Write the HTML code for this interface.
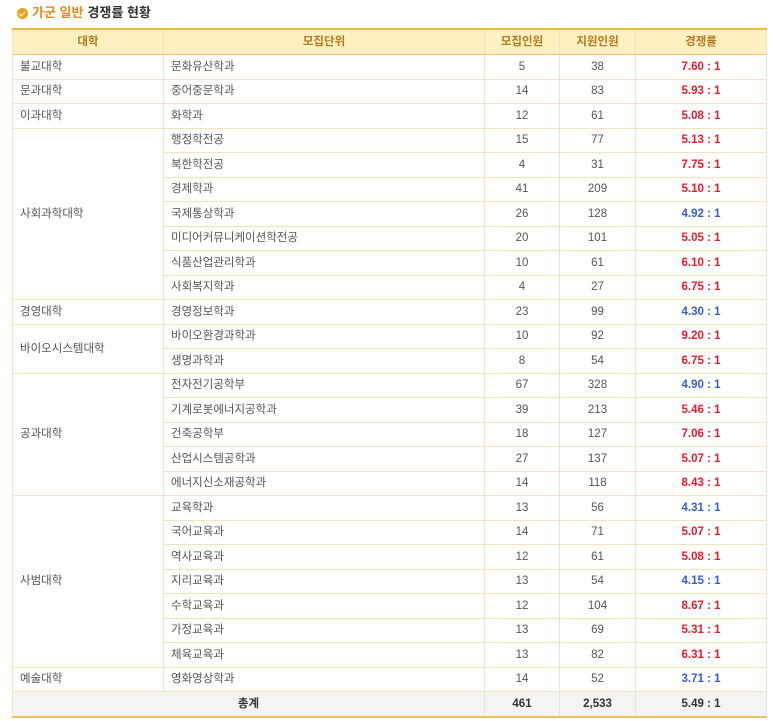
<!DOCTYPE html>
<html><head><meta charset="utf-8"><style>
body{margin:0;background:#fff;font-family:"Liberation Sans","Noto Sans CJK KR",sans-serif;}
h3{position:absolute;left:17px;top:5px;margin:0;font-size:13px;font-weight:bold;color:#333;line-height:16px;display:flex;align-items:center;}
h3 .ic{width:11px;height:11px;border-radius:50%;background:#e8a319;display:inline-block;margin-right:4px;position:relative}
h3 .ic:after{content:"";position:absolute;left:3px;top:2px;width:3px;height:5px;border:solid #fff;border-width:0 1.5px 1.5px 0;transform:rotate(45deg)}
h3 .o{color:#e8891a;margin-right:4px}
table{position:absolute;left:12px;top:28px;width:755px;border-collapse:collapse;font-size:11.5px;color:#555;border-top:2px solid #f5b83d;border-bottom:2px solid #f0c060;border-left:1px solid #f1e3c1;border-right:1px solid #f1e3c1;}
td,th{border:1px solid #f1e3c1;height:23.5px;padding:0 0 0 7px;line-height:14px}
th{background:#fff0c2;color:#b8791d;font-weight:bold;text-align:center;height:24px;padding:0;border-bottom:1px solid #f0c870}
td.c{text-align:center;padding:0}
.r{color:#e8192c;font-weight:bold;text-align:center;padding:0}
.b{color:#3a5bcf;font-weight:bold;text-align:center;padding:0}
tr.t td{background:#f4f4f4;font-weight:bold;color:#333;text-align:center;padding:0}
</style></head><body>
<h3><span class="ic"></span><span class="o">가군 일반</span>경쟁률 현황</h3>
<table>
<colgroup><col style="width:151px"><col style="width:321px"><col style="width:75px"><col style="width:76px"><col></colgroup>
<tr><th>대학</th><th>모집단위</th><th>모집인원</th><th>지원인원</th><th>경쟁률</th></tr>
<tr><td>불교대학</td><td>문화유산학과</td><td class="c">5</td><td class="c">38</td><td class="r">7.60 : 1</td></tr>
<tr><td>문과대학</td><td>중어중문학과</td><td class="c">14</td><td class="c">83</td><td class="r">5.93 : 1</td></tr>
<tr><td>이과대학</td><td>화학과</td><td class="c">12</td><td class="c">61</td><td class="r">5.08 : 1</td></tr>
<tr><td rowspan="7">사회과학대학</td><td>행정학전공</td><td class="c">15</td><td class="c">77</td><td class="r">5.13 : 1</td></tr>
<tr><td>북한학전공</td><td class="c">4</td><td class="c">31</td><td class="r">7.75 : 1</td></tr>
<tr><td>경제학과</td><td class="c">41</td><td class="c">209</td><td class="r">5.10 : 1</td></tr>
<tr><td>국제통상학과</td><td class="c">26</td><td class="c">128</td><td class="b">4.92 : 1</td></tr>
<tr><td>미디어커뮤니케이션학전공</td><td class="c">20</td><td class="c">101</td><td class="r">5.05 : 1</td></tr>
<tr><td>식품산업관리학과</td><td class="c">10</td><td class="c">61</td><td class="r">6.10 : 1</td></tr>
<tr><td>사회복지학과</td><td class="c">4</td><td class="c">27</td><td class="r">6.75 : 1</td></tr>
<tr><td>경영대학</td><td>경영정보학과</td><td class="c">23</td><td class="c">99</td><td class="b">4.30 : 1</td></tr>
<tr><td rowspan="2">바이오시스템대학</td><td>바이오환경과학과</td><td class="c">10</td><td class="c">92</td><td class="r">9.20 : 1</td></tr>
<tr><td>생명과학과</td><td class="c">8</td><td class="c">54</td><td class="r">6.75 : 1</td></tr>
<tr><td rowspan="5">공과대학</td><td>전자전기공학부</td><td class="c">67</td><td class="c">328</td><td class="b">4.90 : 1</td></tr>
<tr><td>기계로봇에너지공학과</td><td class="c">39</td><td class="c">213</td><td class="r">5.46 : 1</td></tr>
<tr><td>건축공학부</td><td class="c">18</td><td class="c">127</td><td class="r">7.06 : 1</td></tr>
<tr><td>산업시스템공학과</td><td class="c">27</td><td class="c">137</td><td class="r">5.07 : 1</td></tr>
<tr><td>에너지신소재공학과</td><td class="c">14</td><td class="c">118</td><td class="r">8.43 : 1</td></tr>
<tr><td rowspan="7">사범대학</td><td>교육학과</td><td class="c">13</td><td class="c">56</td><td class="b">4.31 : 1</td></tr>
<tr><td>국어교육과</td><td class="c">14</td><td class="c">71</td><td class="r">5.07 : 1</td></tr>
<tr><td>역사교육과</td><td class="c">12</td><td class="c">61</td><td class="r">5.08 : 1</td></tr>
<tr><td>지리교육과</td><td class="c">13</td><td class="c">54</td><td class="b">4.15 : 1</td></tr>
<tr><td>수학교육과</td><td class="c">12</td><td class="c">104</td><td class="r">8.67 : 1</td></tr>
<tr><td>가정교육과</td><td class="c">13</td><td class="c">69</td><td class="r">5.31 : 1</td></tr>
<tr><td>체육교육과</td><td class="c">13</td><td class="c">82</td><td class="r">6.31 : 1</td></tr>
<tr><td>예술대학</td><td>영화영상학과</td><td class="c">14</td><td class="c">52</td><td class="b">3.71 : 1</td></tr>
<tr class="t"><td colspan="2">총계</td><td>461</td><td>2,533</td><td>5.49 : 1</td></tr>
</table>
</body></html>
